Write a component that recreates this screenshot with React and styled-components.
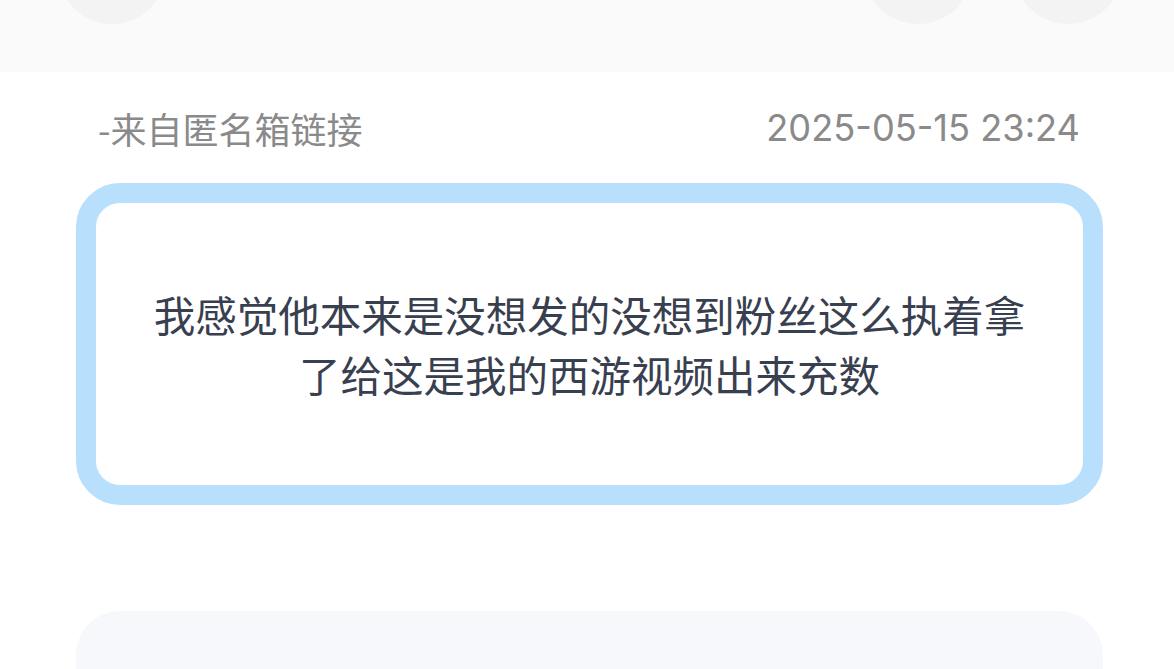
import React from "react";
import styled, { createGlobalStyle } from "styled-components";

const Global = createGlobalStyle`
  html, body { margin: 0; padding: 0; background: #ffffff; }
  body { font-family: "Noto Sans", "Noto Sans CJK SC", sans-serif; overflow: hidden; }
`;

const Page = styled.div`
  width: 1174px;
  height: 669px;
  overflow: hidden;
  background: #ffffff;
  display: flex;
  flex-direction: column;
`;

const TopBar = styled.div`
  height: 72px;
  background: #fafafa;
  display: flex;
  align-items: flex-end;
  padding: 0 52px 0 58px;
  box-sizing: border-box;
  flex-shrink: 0;
`;

const Circle = styled.div`
  width: 108px;
  height: 108px;
  border-radius: 50%;
  background: #f3f3f3;
  margin-bottom: 48px;
  margin-left: ${(p) => p.$gap || 0}px;
  flex-shrink: 0;
`;

const Spacer = styled.div`
  flex: 1;
`;

const MetaRow = styled.div`
  display: flex;
  justify-content: space-between;
  align-items: center;
  padding: 36px 94px 0 98px;
  height: 40px;
  box-sizing: content-box;
  flex-shrink: 0;
  line-height: 40px;
  color: #8a8a8a;
`;

const Source = styled.span`
  font-family: "Noto Sans CJK SC", "Noto Sans", sans-serif;
  font-size: 36px;
`;

const Time = styled.span`
  font-family: Inter, "Noto Sans", sans-serif;
  font-size: 36.2px;
`;

const MessageCard = styled.div`
  margin: 35px 71px 0 76px;
  height: 322px;
  flex-shrink: 0;
  box-sizing: border-box;
  border: 20px solid #b8e0fd;
  border-radius: 44px;
  background: #ffffff;
  display: flex;
  align-items: center;
  justify-content: center;
  padding: 0 40px;
`;

const MessageText = styled.p`
  margin: 0;
  font-family: "Noto Sans CJK SC", sans-serif;
  font-size: 41.5px;
  line-height: 60px;
  color: #384050;
  text-align: center;
  max-width: 880px;
`;

const NextCard = styled.div`
  margin: 106px 71px 0 76px;
  height: 200px;
  flex-shrink: 0;
  border-radius: 44px;
  background: #f6f8fc;
`;

export default function App() {
  return (
    <Page>
      <Global />
      <TopBar>
        <Circle />
        <Spacer />
        <Circle />
        <Circle $gap={42} />
      </TopBar>
      <MetaRow>
        <Source>-来自匿名箱链接</Source>
        <Time>2025-05-15 23:24</Time>
      </MetaRow>
      <MessageCard>
        <MessageText>
          我感觉他本来是没想发的没想到粉丝这么执着拿
          <br />
          了给这是我的西游视频出来充数
        </MessageText>
      </MessageCard>
      <NextCard />
    </Page>
  );
}
